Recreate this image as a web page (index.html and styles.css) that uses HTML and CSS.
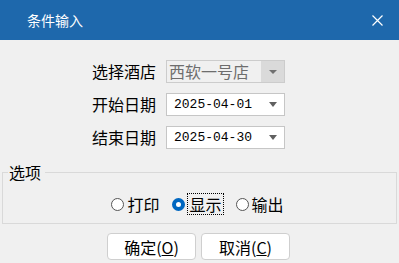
FILE: index.html
```html
<!DOCTYPE html>
<html lang="zh-CN">
<head>
  <meta charset="UTF-8">
  <title>条件输入</title>
  <link rel="stylesheet" href="styles.css">
</head>
<body>
  <header class="titlebar">
    <span class="title">条件输入</span>
    <svg class="close" width="11" height="11" viewBox="0 0 11 11">
      <path d="M0.5 0.5 L10.5 10.5 M10.5 0.5 L0.5 10.5" stroke="#fff" stroke-width="1.2" fill="none"/>
    </svg>
  </header>

  <div class="form">
    <label class="label">选择酒店</label>
    <div class="combo disabled">
      <span class="value">西软一号店</span>
      <span class="drop"><i class="arrow"></i></span>
    </div>

    <label class="label">开始日期</label>
    <div class="combo">
      <span class="value date">2025-04-01</span>
      <span class="drop"><i class="arrow"></i></span>
    </div>

    <label class="label">结束日期</label>
    <div class="combo">
      <span class="value date">2025-04-30</span>
      <span class="drop"><i class="arrow"></i></span>
    </div>
  </div>

  <fieldset class="group">
    <legend>选项</legend>
    <div class="radios">
      <div class="radio"><span class="dot"></span><span class="text">打印</span></div>
      <div class="radio checked"><span class="dot"></span><span class="text focus">显示</span></div>
      <div class="radio"><span class="dot"></span><span class="text">输出</span></div>
    </div>
  </fieldset>

  <div class="buttons">
    <button>确定(<u>O</u>)</button>
    <button>取消(<u>C</u>)</button>
  </div>
</body>
</html>
```

FILE: styles.css
```css
body {
  margin: 0;
  width: 399px;
  height: 263px;
  overflow: hidden;
  background-color: #f0f0f0;
  font-family: "Noto Sans CJK SC", "Liberation Sans", sans-serif;
  color: #000;
}
.titlebar {
  height: 40px;
  background-color: #1e68ac;
  color: white;
  display: flex;
  align-items: center;
  justify-content: space-between;
  padding: 0 16px 0 27px;
}
.title {
  font-size: 14px;
  line-height: 20px;
}
.form {
  display: grid;
  grid-template-columns: 64px 119px;
  grid-auto-rows: 23px;
  column-gap: 10px;
  row-gap: 10px;
  padding: 20px 0 0 92px;
}
.label {
  font-size: 16px;
  line-height: 23px;
  white-space: nowrap;
}
.combo {
  display: flex;
  box-sizing: border-box;
  border: 1px solid #c6c6c6;
  background: white;
}
.combo .value {
  flex: 1;
  font-size: 16px;
  line-height: 21px;
  padding-left: 2px;
  white-space: nowrap;
}
.combo .value.date {
  font-family: "Liberation Mono", monospace;
  font-size: 13px;
  padding-left: 7px;
}
.drop {
  width: 23px;
  display: flex;
  align-items: center;
  justify-content: center;
}
.arrow {
  width: 0;
  height: 0;
  border-left: 4.5px solid transparent;
  border-right: 4.5px solid transparent;
  border-top: 5px solid #606060;
  margin-left: 1px;
}
.combo.disabled {
  background: #f0f0f0;
  border-color: #cccccc;
}
.combo.disabled .value {
  color: #6d6d6d;
}
.combo.disabled .drop {
  background: #dadada;
}
.combo.disabled .arrow {
  border-left-width: 4px;
  border-right-width: 4px;
  border-top-width: 4px;
  border-top-color: #707070;
}
.group {
  margin: 14px 2px 0;
  padding: 13px 0 9px;
  border: 1px solid #d9d9d9;
  min-width: 0;
}
.group legend {
  font-size: 16px;
  line-height: 18px;
  padding: 0 4px 0 1px;
  margin-left: 5px;
}
.radios {
  display: flex;
  justify-content: center;
  gap: 13px;
  padding-right: 4px;
}
.radio {
  display: flex;
  align-items: center;
  gap: 3px;
  font-size: 16px;
  line-height: 20px;
}
.dot {
  box-sizing: border-box;
  width: 13px;
  height: 13px;
  border: 1px solid #555;
  border-radius: 50%;
  background: white;
}
.radio.checked .dot {
  border: 4px solid #0067c0;
  background: white;
}
.text.focus {
  outline: 1px dotted #000;
  outline-offset: 0;
  padding: 0 1px;
}
.buttons {
  display: flex;
  justify-content: center;
  gap: 5px;
  margin-top: 9px;
  padding-right: 2px;
}
button {
  width: 89px;
  height: 27px;
  padding: 0;
  background: white;
  border: 1px solid #cfcfcf;
  border-radius: 4px;
  font-family: "Noto Sans CJK SC", "Liberation Sans", sans-serif;
  font-size: 16px;
  line-height: 24px;
  color: #000;
}
```
